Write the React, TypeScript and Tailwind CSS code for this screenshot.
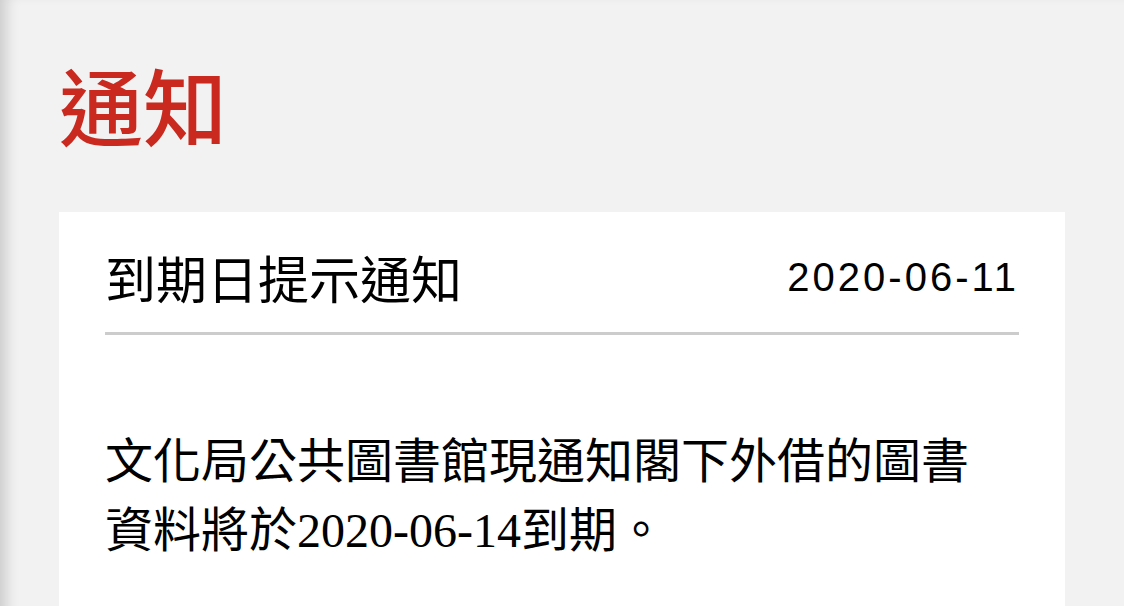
const notice = {
  title: '到期日提示通知',
  date: '2020-06-11',
  before: '文化局公共圖書館現通知閣下外借的圖書資料將於',
  due: '2020-06-14',
  after: '到期。',
}

export default function App() {
  return (
    <div className="min-h-screen bg-[#f2f2f2] px-[59px] shadow-[inset_14px_0_14px_-8px_rgba(0,0,0,0.16)] font-['Noto_Sans_CJK_TC',sans-serif]">
      <h1 className="pt-[49px] text-[84px] leading-[110px] font-medium text-[#c9291f]">通知</h1>

      <div className="mt-[53px] bg-white px-[46px] pb-[60px]">
        <div className="flex items-center justify-between border-b-[3px] border-[#cccccc] pt-[29px] pb-[19px]">
          <span className="text-[51px] leading-[72px] text-black">{notice.title}</span>
          <span className="font-['Liberation_Sans',sans-serif] text-[40px] tracking-[3px] text-black">{notice.date}</span>
        </div>

        <p className="mt-[88px] max-w-[880px] text-[48px] leading-[69px] text-black">
          {notice.before}
          <span className="font-['Liberation_Serif',serif]">{notice.due}</span>
          {notice.after}
        </p>
      </div>
    </div>
  )
}
